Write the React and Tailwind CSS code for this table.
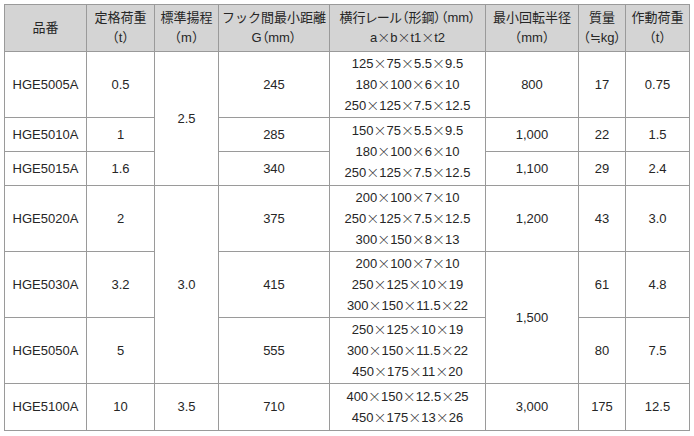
import React from "react";

const X = () => (
  <span className="inline-block w-[13px] text-center [font-family:'Noto_Sans_CJK_JP',sans-serif] font-light leading-none">×</span>
);

function Rail({ lines }) {
  return (
    <div className="leading-[21px]">
      {lines.map((l, i) => {
        const parts = l.split("×");
        return (
          <div key={i} className="whitespace-nowrap">
            {parts.map((p, j) => (
              <React.Fragment key={j}>
                {j > 0 && <X />}
                {p}
              </React.Fragment>
            ))}
          </div>
        );
      })}
    </div>
  );
}

const td = "border border-[#9a9a9a] text-center align-middle p-0";
const th = "border border-[#9a9a9a] text-center align-middle p-0 font-normal leading-[20px]";
const palt = "[font-feature-settings:'palt']";

export default function App() {
  return (
    <div className="bg-white w-[694px] h-[436px] pt-1 pl-1 text-[13px] text-[#262626] [font-family:'Liberation_Sans','Noto_Sans_CJK_JP',sans-serif]">
      <table className="table-fixed border-collapse w-[685px]">
        <colgroup>
          <col className="w-[82px]" />
          <col className="w-[68px]" />
          <col className="w-[64px]" />
          <col className="w-[111px]" />
          <col className="w-[156px]" />
          <col className="w-[93px]" />
          <col className="w-[47px]" />
          <col className="w-[64px]" />
        </colgroup>
        <thead>
          <tr className="h-[47px] bg-[#d4d4d4]">
            <th className={th}>品番</th>
            <th className={th}>定格荷重<br />（t）</th>
            <th className={th}>標準揚程<br />（m）</th>
            <th className={th}>フック間最小距離<br /><span className={palt}>G（mm）</span></th>
            <th className={`${th} ${palt} whitespace-nowrap`}>横行レール（形鋼）（mm）<br />a<X />b<X />t1<X />t2</th>
            <th className={th}>最小回転半径<br />（mm）</th>
            <th className={`${th} ${palt} whitespace-nowrap`}>質量<br />（≒kg）</th>
            <th className={th}>作動荷重<br />（t）</th>
          </tr>
        </thead>
        <tbody>
          <tr className="h-[66px]">
            <td className={td}>HGE5005A</td>
            <td className={td}>0.5</td>
            <td className={td} rowSpan={3}>2.5</td>
            <td className={td}>245</td>
            <td className={td}><Rail lines={["125×75×5.5×9.5", "180×100×6×10", "250×125×7.5×12.5"]} /></td>
            <td className={td}>800</td>
            <td className={td}>17</td>
            <td className={td}>0.75</td>
          </tr>
          <tr className="h-[34px]">
            <td className={td}>HGE5010A</td>
            <td className={td}>1</td>
            <td className={td}>285</td>
            <td className={td} rowSpan={2}><Rail lines={["150×75×5.5×9.5", "180×100×6×10", "250×125×7.5×12.5"]} /></td>
            <td className={td}>1,000</td>
            <td className={td}>22</td>
            <td className={td}>1.5</td>
          </tr>
          <tr className="h-[34px]">
            <td className={td}>HGE5015A</td>
            <td className={td}>1.6</td>
            <td className={td}>340</td>
            <td className={td}>1,100</td>
            <td className={td}>29</td>
            <td className={td}>2.4</td>
          </tr>
          <tr className="h-[66px]">
            <td className={td}>HGE5020A</td>
            <td className={td}>2</td>
            <td className={td} rowSpan={3}>3.0</td>
            <td className={td}>375</td>
            <td className={td}><Rail lines={["200×100×7×10", "250×125×7.5×12.5", "300×150×8×13"]} /></td>
            <td className={td}>1,200</td>
            <td className={td}>43</td>
            <td className={td}>3.0</td>
          </tr>
          <tr className="h-[66px]">
            <td className={td}>HGE5030A</td>
            <td className={td}>3.2</td>
            <td className={td}>415</td>
            <td className={td}><Rail lines={["200×100×7×10", "250×125×10×19", "300×150×11.5×22"]} /></td>
            <td className={td} rowSpan={2}>1,500</td>
            <td className={td}>61</td>
            <td className={td}>4.8</td>
          </tr>
          <tr className="h-[66px]">
            <td className={td}>HGE5050A</td>
            <td className={td}>5</td>
            <td className={td}>555</td>
            <td className={td}><Rail lines={["250×125×10×19", "300×150×11.5×22", "450×175×11×20"]} /></td>
            <td className={td}>80</td>
            <td className={td}>7.5</td>
          </tr>
          <tr className="h-[47px]">
            <td className={td}>HGE5100A</td>
            <td className={td}>10</td>
            <td className={td}>3.5</td>
            <td className={td}>710</td>
            <td className={td}><Rail lines={["400×150×12.5×25", "450×175×13×26"]} /></td>
            <td className={td}>3,000</td>
            <td className={td}>175</td>
            <td className={td}>12.5</td>
          </tr>
        </tbody>
      </table>
    </div>
  );
}
